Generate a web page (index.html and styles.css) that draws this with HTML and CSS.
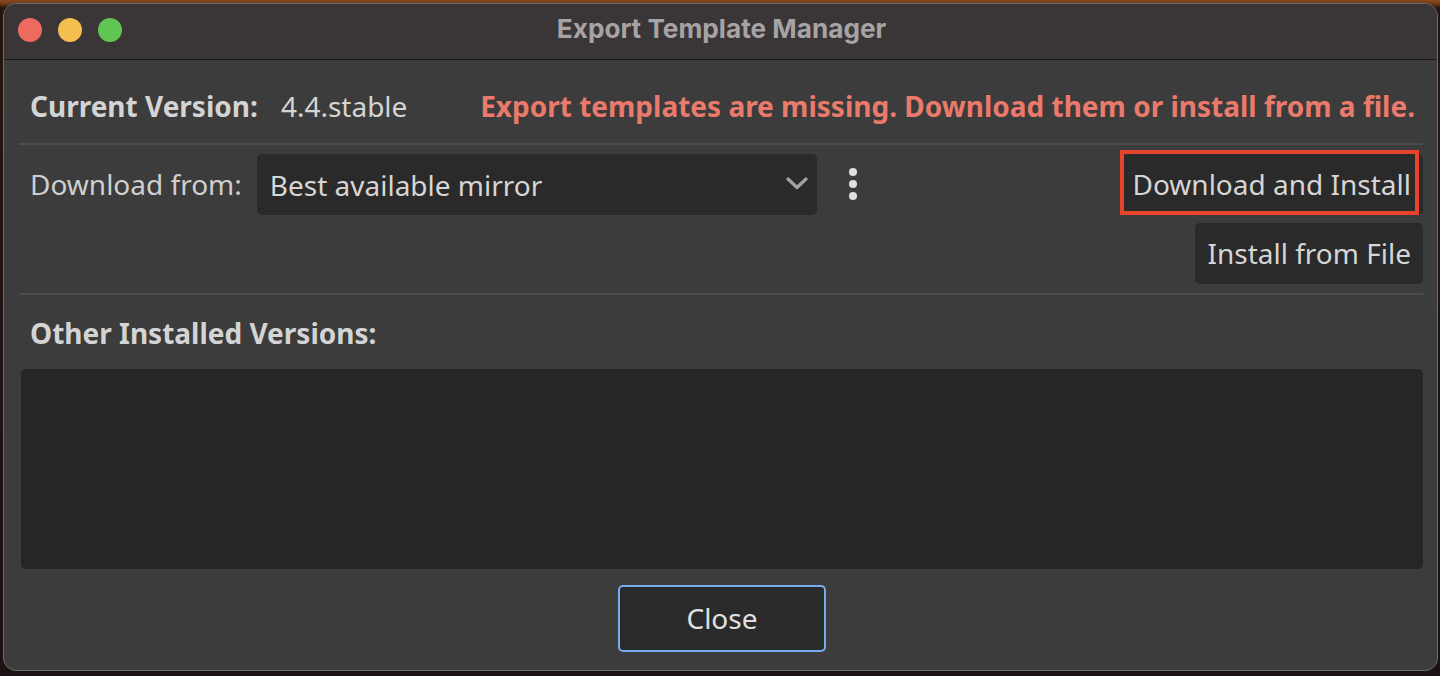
FILE: index.html
```html
<!DOCTYPE html>
<html>
<head>
<meta charset="utf-8">
<link rel="stylesheet" href="styles.css">
</head>
<body>
<div class="window">
  <div class="titlebar">
    <div class="lights">
      <span class="light red"></span>
      <span class="light yellow"></span>
      <span class="light green"></span>
    </div>
    <div class="title">Export Template Manager</div>
  </div>
  <div class="content">
    <div class="version-row">
      <span class="bold-label">Current Version:</span>
      <span class="version">4.4.stable</span>
      <span class="spacer"></span>
      <span class="warning">Export templates are missing. Download them or install from a file.</span>
    </div>
    <div class="sep"></div>
    <div class="download-row">
      <span class="label">Download from:</span>
      <div class="select">
        <span>Best available mirror</span>
        <svg class="chevron" width="22" height="13" viewBox="0 0 22 13"><path d="M2 2 L11 10.5 L20 2" fill="none" stroke="#a3a3a3" stroke-width="3.2" stroke-linecap="round" stroke-linejoin="round"/></svg>
      </div>
      <svg class="kebab" width="10" height="34" viewBox="0 0 10 34"><circle cx="5" cy="5" r="4" fill="#e0e0e0"/><circle cx="5" cy="17" r="4" fill="#e0e0e0"/><circle cx="5" cy="29" r="4" fill="#e0e0e0"/></svg>
      <span class="spacer"></span>
      <div class="buttons">
        <div class="btn btn-dl">Download and Install<span class="highlight"></span></div>
        <div class="btn">Install from File</div>
      </div>
    </div>
    <div class="sep sep2"></div>
    <div class="other-label bold-label">Other Installed Versions:</div>
    <div class="list"></div>
    <div class="footer">
      <div class="btn close">Close</div>
    </div>
  </div>
</div>
</body>
</html>
```
FILE: styles.css
```css
html, body {
  margin: 0;
  padding: 0;
}
body {
  width: 1440px;
  height: 676px;
  overflow: hidden;
  background: linear-gradient(to bottom, #8a4a1c 0px, #6b3a1a 4px, #241510 8px, #1c1212 100%);
  font-family: "Noto Sans", "Open Sans", sans-serif;
}
.window {
  margin: 3px 2px 0 3px;
  height: 668px;
  border: 1px solid #6e6b6c;
  border-radius: 13px;
  background: #3c3c3c;
  overflow: hidden;
  display: flex;
  flex-direction: column;
  box-sizing: border-box;
}
.titlebar {
  height: 55px;
  flex: none;
  background: #3a3637;
  border-bottom: 1px solid #1b1919;
  position: relative;
  display: flex;
  align-items: center;
  justify-content: center;
}
.lights {
  position: absolute;
  left: 14px;
  top: 14px;
  display: flex;
  gap: 16px;
}
.light {
  width: 24px;
  height: 24px;
  border-radius: 50%;
  display: block;
}
.red { background: #ed6a5e; }
.yellow { background: #f5bf4f; }
.green { background: #61c554; }
.title {
  font-family: Inter, "Liberation Sans", sans-serif;
  font-weight: 700;
  font-size: 26.2px;
  color: #a7a3a4;
  margin-top: -6px;
  margin-left: 2px;
}
.content {
  flex: 1;
  display: flex;
  flex-direction: column;
  padding: 0 14px 0 15px;
}
.version-row {
  display: flex;
  align-items: center;
  height: 40px;
  margin-top: 26px;
  padding-left: 11px;
  padding-right: 8px;
}
.bold-label {
  font-weight: 700;
  font-size: 28px;
  color: #d4d4d4;
}
.version {
  font-size: 28px;
  color: #d4d4d4;
  margin-left: 23px;
}
.spacer { flex: 1; }
.warning {
  font-weight: 700;
  font-size: 28px;
  color: #ea7a6b;
}
.sep {
  height: 2px;
  background: #4c4c4c;
  margin-top: 17px;
}
.download-row {
  display: flex;
  align-items: flex-start;
  margin-top: 9px;
  padding-left: 11px;
}
.label {
  font-size: 28px;
  color: #cfcfcf;
  height: 61px;
  line-height: 61px;
}
.select {
  width: 560px;
  height: 61px;
  margin-left: 15px;
  background: #2a2a2a;
  border-radius: 5px;
  display: flex;
  align-items: center;
  justify-content: space-between;
  padding: 0 9px 0 13px;
  box-sizing: border-box;
  font-size: 28px;
  color: #d6d6d6;
}
.chevron {
  display: block;
  margin-top: -2px;
}
.kebab {
  display: block;
  margin-left: 31px;
  margin-top: 13px;
}
.buttons {
  display: flex;
  flex-direction: column;
  align-items: flex-end;
  gap: 8px;
}
.btn {
  height: 61px;
  line-height: 61px;
  padding: 0 12px;
  background: #2a2a2a;
  border-radius: 5px;
  font-size: 28px;
  color: #d6d6d6;
  box-sizing: border-box;
}
.btn-dl {
  position: relative;
  padding: 0 12px 0 10px;
}
.highlight {
  position: absolute;
  left: -3px;
  top: -4px;
  right: 4px;
  bottom: 0px;
  border: 4px solid #e8442b;
  pointer-events: none;
}
.sep2 {
  margin-top: 9px;
}
.other-label {
  padding-left: 11px;
  margin-top: 18px;
  height: 40px;
  line-height: 40px;
}
.list {
  margin-top: 16px;
  margin-left: 2px;
  height: 200px;
  background: #262626;
  border-radius: 5px;
}
.footer {
  display: flex;
  justify-content: center;
  margin-top: 16px;
}
.close {
  width: 208px;
  height: 67px;
  line-height: 63px;
  text-align: center;
  border: 2px solid #77acef;
  border-radius: 5px;
  color: #e0e0e0;
  margin-left: 2px;
}
```
